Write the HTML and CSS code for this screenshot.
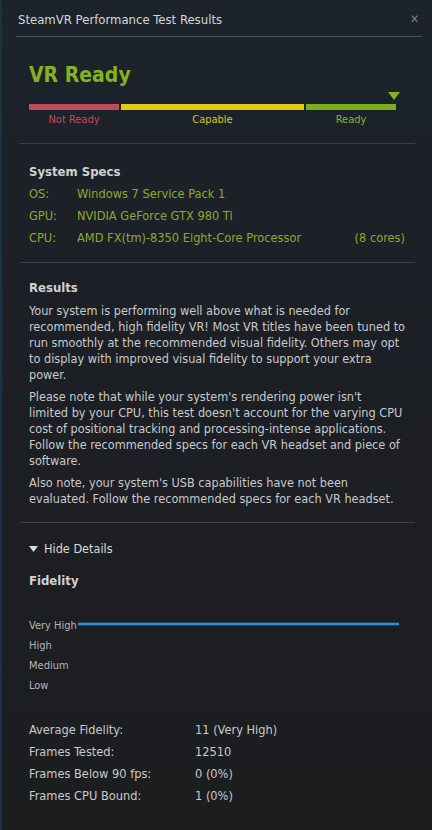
FILE: index.html
```html
<!DOCTYPE html>
<html lang="en">
  <head>
    <meta charset="UTF-8" />
    <meta name="viewport" content="width=device-width, initial-scale=1.0" />
    <title>SteamVR Performance Test Results</title>
    <link rel="stylesheet" href="styles.css">
  </head>
  <body>
    <div class="window">
      <div class="titlebar">
        <span class="title">SteamVR Performance Test Results</span>
        <span class="close">&#x2715;</span>
      </div>

      <div class="section">
        <h1 class="verdict">VR Ready</h1>
        <div class="meter">
          <div class="marker-row">
            <svg class="marker" width="12" height="8" viewBox="0 0 12 8">
              <polygon points="0,0 12,0 6,8" fill="#86b21f" />
            </svg>
          </div>
          <div class="bar">
            <div class="seg seg-red"></div>
            <div class="seg seg-yellow"></div>
            <div class="seg seg-green"></div>
          </div>
          <div class="bar-labels">
            <span class="lbl-red">Not Ready</span>
            <span class="lbl-yellow">Capable</span>
            <span class="lbl-green">Ready</span>
          </div>
        </div>
      </div>

      <hr class="divider" />

      <div class="section">
        <h2>System Specs</h2>
        <div class="specs">
          <div class="spec-row"><span class="spec-key">OS:</span><span class="spec-val">Windows 7 Service Pack 1</span></div>
          <div class="spec-row"><span class="spec-key">GPU:</span><span class="spec-val">NVIDIA GeForce GTX 980 Ti</span></div>
          <div class="spec-row"><span class="spec-key">CPU:</span><span class="spec-val">AMD FX(tm)-8350 Eight-Core Processor</span><span class="spec-extra">(8 cores)</span></div>
        </div>
      </div>

      <hr class="divider" />

      <div class="section results">
        <h2 class="results-title">Results</h2>
        <p>Your system is performing well above what is needed for recommended, high fidelity VR! Most VR titles have been tuned to run smoothly at the recommended visual fidelity. Others may opt to display with improved visual fidelity to support your extra power.</p>
        <p class="note">Please note that while your system's rendering power isn't limited by your CPU, this test doesn't account for the varying CPU cost of positional tracking and processing-intense applications. Follow the recommended specs for each VR headset and piece of software.</p>
        <p>Also note, your system's USB capabilities have not been evaluated. Follow the recommended specs for each VR headset.</p>
      </div>

      <hr class="divider" />

      <div class="section">
        <div class="toggle">
          <svg class="toggle-arrow" width="9" height="6" viewBox="0 0 9 6">
            <polygon points="0,0 9,0 4.5,6" fill="#d8d9da" />
          </svg>
          <span>Hide Details</span>
        </div>
        <h2 class="fidelity-title">Fidelity</h2>
        <div class="chart">
          <div class="chart-labels">
            <span>Very High</span>
            <span>High</span>
            <span>Medium</span>
            <span>Low</span>
          </div>
          <svg class="chart-plot" viewBox="0 0 321 80" preserveAspectRatio="none">
            <polyline points="0,8 321,8" fill="none" stroke="#1e9be0" stroke-width="2.5" />
          </svg>
        </div>
        <div class="stats">
          <div class="stat-row"><span class="stat-key">Average Fidelity:</span><span>11 (Very High)</span></div>
          <div class="stat-row"><span class="stat-key">Frames Tested:</span><span>12510</span></div>
          <div class="stat-row"><span class="stat-key">Frames Below 90 fps:</span><span>0 (0%)</span></div>
          <div class="stat-row"><span class="stat-key">Frames CPU Bound:</span><span>1 (0%)</span></div>
        </div>
      </div>
    </div>
  </body>
</html>
```

FILE: styles.css
```css
html {
  background-color: #1c1d1f;
}

body {
  margin: 0;
  min-height: 830px;
  font-family: "DejaVu Sans Condensed", "DejaVu Sans", sans-serif;
  font-size: 12.58px;
  color: #c8cacc;
  background: linear-gradient(to bottom, #1d232b 0%, #1c1f24 50%, #1c1d1f 100%);
  border-left: 2px solid #1c3047;
  box-sizing: border-box;
}

.window {
  padding-bottom: 20px;
}

.titlebar {
  display: flex;
  justify-content: space-between;
  align-items: center;
  height: 37px;
  margin: 0 10px 0 14px;
  padding: 2px 0 0 2px;
  box-sizing: border-box;
  border-bottom: 1px solid #4a5058;
}

.title {
  font-size: 13px;
  color: #d4d6d8;
}

.close {
  font-size: 12px;
  color: #7c8088;
  margin-right: 3px;
}

.section {
  padding: 0 27px 0 27px;
}

.divider {
  border: 0;
  border-top: 1px solid #3b4148;
  margin: 0 17px 0 18px;
}

.verdict {
  margin: 26px 0 0;
  font-size: 21px;
  line-height: 24px;
  font-weight: bold;
  color: #86b21f;
}

.meter {
  margin-top: 5px;
}

.marker-row {
  display: flex;
  justify-content: flex-end;
  height: 8px;
  padding-right: 5px;
}

.bar {
  display: flex;
  gap: 2px;
  height: 6px;
  margin-top: 4px;
  width: 367px;
}

.seg-red {
  width: 90px;
  background-color: #bf4a5a;
}

.seg-yellow {
  width: 183px;
  background-color: #e2cb13;
}

.seg-green {
  width: 90px;
  background-color: #7aae1c;
}

.bar-labels {
  display: flex;
  width: 367px;
  font-size: 11px;
  line-height: 16px;
  margin-top: 2px;
  margin-bottom: 15px;
}

.bar-labels span {
  text-align: center;
}

.lbl-red {
  width: 90px;
  color: #c24b5d;
}

.lbl-yellow {
  width: 187px;
  color: #d6c41f;
}

.lbl-green {
  width: 90px;
  color: #8cb02a;
}

h2 {
  margin: 20px 0 2px;
  font-size: 13px;
  line-height: 16px;
  font-weight: bold;
  color: #d0d2d4;
}

.spec-row {
  display: flex;
  height: 22px;
  align-items: center;
  color: #8caa2a;
  font-size: 12.7px;
}

.spec-key {
  width: 48px;
}

.spec-val {
  flex: 1;
}

.specs {
  margin-bottom: 14px;
}

.results {
  padding-right: 26px;
}

.results-title {
  margin: 17px 0 7px;
}

p {
  margin: 0 0 6px;
  line-height: 16px;
}

.results .note {
  margin-right: 3px;
}

.results p:last-child {
  margin-bottom: 15px;
}

.toggle {
  display: flex;
  align-items: center;
  gap: 6px;
  margin-top: 18px;
  line-height: 16px;
  color: #d8d9da;
}

.fidelity-title {
  margin: 16px 0 0;
}

.chart {
  display: flex;
  margin-top: 27px;
  height: 80px;
}

.chart-labels {
  display: flex;
  flex-direction: column;
  width: 49px;
  font-size: 11px;
  line-height: 20px;
  color: #b4b6b8;
}

.chart-labels span {
  white-space: nowrap;
}

.chart-plot {
  width: 321px;
  height: 80px;
}

.stats {
  margin-top: 22px;
  font-size: 12.7px;
}

.stat-row {
  display: flex;
  height: 22px;
  align-items: center;
}

.stat-key {
  width: 166px;
}
```
